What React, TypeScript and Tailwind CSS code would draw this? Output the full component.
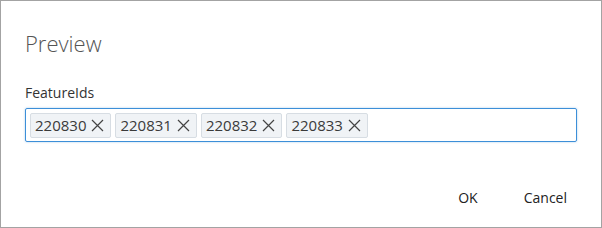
const ids = ["220830", "220831", "220832", "220833"];

function Cross() {
    return (
        <svg width="13" height="13" viewBox="0 0 13 13" className="text-[#444]">
            <path d="M1 1L12 12M12 1L1 12" stroke="currentColor" strokeWidth="1.2" fill="none" />
        </svg>
    );
}

export default function App() {
    return (
        <div className="w-[602px] h-[228px] bg-white" style={{ fontFamily: '"Open Sans", "Noto Sans", sans-serif' }}>
            <div className="flex h-full w-full flex-col border border-[#a3a3a3] px-6 text-[#333]">
                <h1 className="mt-[24px] text-[22px] font-light leading-[36px] text-[#555]">Preview</h1>

                <label className="mt-[22px] text-[14px] leading-[20px] text-[#333]">FeatureIds</label>
                <div className="mt-[5px] flex h-[34px] w-[552px] items-center gap-1 rounded-[2px] border border-[#3d8fd8] px-1 shadow-[0_0_2px_rgba(61,143,216,0.5)]">
                    {ids.map((id) => (
                        <span
                            key={id}
                            className="flex h-[25px] items-center gap-[5px] rounded-[2px] border border-[#d7dde3] bg-[#f0f3f6] pl-[4px] pr-[6px] text-[15px] text-[#3a3a3a]"
                        >
                            {id}
                            <Cross />
                        </span>
                    ))}
                </div>

                <div className="mt-auto mb-[14px] flex justify-end gap-[26px]">
                    <button className="h-[32px] px-[10px] text-[14px] text-[#222]">OK</button>
                    <button className="h-[32px] px-[10px] text-[14px] text-[#222]">Cancel</button>
                </div>
            </div>
        </div>
    );
}
